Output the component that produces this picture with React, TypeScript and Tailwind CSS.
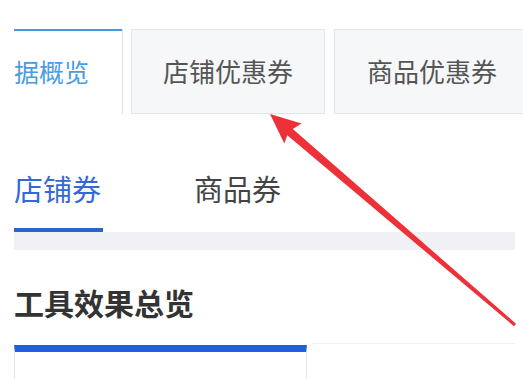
import React from "react";

const font = { fontFamily: '"Noto Sans CJK SC", "Noto Sans", sans-serif' };

function Arrow() {
  // red annotation arrow pointing at the shop coupon tab
  return (
    <svg className="pointer-events-none absolute left-0 top-0" width="523" height="379" viewBox="0 0 523 379">
      <polygon
        points="270,114 301.5,123.5 292.8,129 516,323.8 514,326.2 287.3,135.3 284.3,143.6"
        fill="#ee3038"
      />
    </svg>
  );
}

export default function App() {
  return (
    <div className="relative h-[379px] w-[523px] overflow-hidden bg-white" style={font}>
      <div className="pl-[14px] pt-[29px]">
        {/* top tabs */}
        <div className="flex h-[85px] items-stretch">
          <div className="flex w-[109px] shrink-0 flex-col border-r border-[#dfe1e5] bg-white">
            <div className="h-[2px] bg-[#4a97e0]" />
            <div className="flex flex-1 items-center pb-[3px]">
              <span className="text-[25px] leading-none text-[#4a9be6]">据概览</span>
            </div>
          </div>
          <div className="ml-[8px] flex w-[194px] shrink-0 items-center justify-center border border-[#e2e4e8] bg-[#f6f7f9] pb-[2px]">
            <span className="text-[26px] leading-none text-[#555]">店铺优惠券</span>
          </div>
          <div className="ml-[9px] flex w-[220px] shrink-0 items-center border border-r-0 border-[#e2e4e8] bg-[#f6f7f9] pb-[2px] pl-[32px]">
            <span className="text-[26px] leading-none text-[#555]">商品优惠券</span>
          </div>
        </div>

        {/* sub tabs */}
        <div className="flex h-[118px] items-end pr-[8px]">
          <div className="flex flex-col">
            <span className="text-[29px] leading-none text-[#3568d4]">店铺券</span>
            <div className="mt-[25px] h-[4px] w-[89px] bg-[#2c63cb]" />
          </div>
          <div className="ml-[91px] flex flex-col">
            <span className="text-[29px] leading-none text-[#444]">商品券</span>
            <div className="mt-[25px] h-[4px]" />
          </div>
        </div>
        <div className="mr-[8px] h-[18px] bg-[#f0f1f4]" />

        {/* overview */}
        <h2 className="mt-[37px] text-[30px] font-bold leading-none text-[#333]">工具效果总览</h2>
        <div className="mt-[28px] flex pr-[8px]">
          <div className="h-[40px] w-[293px] border-x border-[#e3e5e9] border-t-[7px] border-t-[#2160d8]" />
          <div className="ml-[5px] mt-[-2px] h-[40px] flex-1 border-t border-[#eef0f2]" />
        </div>
      </div>
      <Arrow />
    </div>
  );
}
